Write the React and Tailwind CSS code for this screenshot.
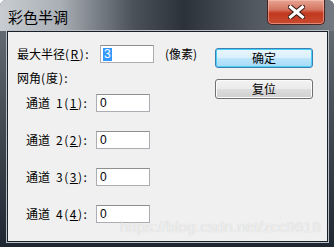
import React from "react";

const cjk = { fontFamily: '"Noto Sans CJK SC", "Liberation Sans", sans-serif' };

function Input({ value, selected }) {
  return (
    <div className="w-[54px] h-[18px] bg-white border border-[#abadb3] border-t-[#8e8f8f] flex items-center pl-[2px] text-[12px] leading-none text-black" style={{ fontFamily: '"Liberation Sans", sans-serif' }}>
      {selected ? (
        <span className="bg-[#3399ff] text-white px-[1px] h-[13px] flex items-center">{value}</span>
      ) : (
        <span className="px-[1px]">{value}</span>
      )}
    </div>
  );
}

function Channel({ n }) {
  return (
    <div className="flex items-center h-[18px]">
      <div className="w-[79px] pl-[9px] text-[12px] leading-none whitespace-nowrap" style={cjk}>
        通道<span className="ml-[6px] tracking-[1.5px]">{n}(<span className="underline">{n}</span>):</span>
      </div>
      <Input value="0" />
    </div>
  );
}

export default function App() {
  return (
    <div className="relative w-[334px] h-[247px] overflow-hidden flex flex-col bg-[linear-gradient(to_bottom,#6d747b_0%,#4a525b_40%,#1f2832_100%)] rounded-t-[6px]">
      {/* title bar */}
      <div className="h-[31px] shrink-0 flex items-start justify-between bg-[linear-gradient(to_right,#c9cdd1_0%,#a9afb5_18%,#4b5159_40%,#2c323a_55%,#4f565e_75%,#737a82_100%)]">
        <div className="pl-[8px] pt-[8px] text-[15px] leading-[18px] text-black" style={cjk}>彩色半调</div>
        <div className="mr-[9px] w-[58px] h-[25px] rounded-b-[5px] border border-t-0 border-[#4a2420] bg-[linear-gradient(to_bottom,#e8a593_0%,#d47560_40%,#c2391f_55%,#c84a30_100%)] flex items-center justify-center shadow-[inset_0_0_0_1px_rgba(255,200,190,0.5)]">
          <svg width="17" height="14" viewBox="0 0 17 14">
            <path d="M2.5 2 L8.5 7 L14.5 2 M2.5 12 L8.5 7 L14.5 12" stroke="#3a1a14" strokeWidth="5" fill="none" strokeLinecap="square" />
            <path d="M2.5 2 L8.5 7 L14.5 2 M2.5 12 L8.5 7 L14.5 12" stroke="#ffffff" strokeWidth="3" fill="none" strokeLinecap="square" />
          </svg>
        </div>
      </div>
      {/* client */}
      <div className="ml-[7px] mr-[6px] h-[211px] border border-[#1a2028] shadow-[0_0_0_1px_#b9bec4]">
        <div className="relative h-full bg-[#f0f0f0] flex">
          <div className="flex flex-col pl-[9px] text-black">
            <div className="mt-[13px] flex items-center h-[18px]">
              <div className="w-[83px] text-[12px] leading-none whitespace-nowrap" style={cjk}>
                最大半径<span className="tracking-[1.5px]">(<span className="underline">R</span>):</span>
              </div>
              <Input value="3" selected />
              <div className="ml-[11px] text-[12px] leading-none whitespace-nowrap" style={cjk}>(像素)</div>
            </div>
            <div className="mt-[9px] h-[12px] text-[12px] leading-[12px] whitespace-nowrap" style={cjk}>网角<span className="tracking-[1px]">(度):</span></div>
            <div className="mt-[10px] flex flex-col gap-[19px]">
              <Channel n={1} />
              <Channel n={2} />
              <Channel n={3} />
              <Channel n={4} />
            </div>
          </div>
          <div className="ml-auto mr-[14px] mt-[16px] flex flex-col gap-[11px]">
            <div className="w-[98px] h-[20px] rounded-[3px] border border-[#3c7fb1] shadow-[inset_0_0_0_1px_#48d0f8] bg-[linear-gradient(to_bottom,#eaf6fd_0%,#d9f0fc_50%,#bee6fd_51%,#a7d9f5_100%)] flex items-center justify-center text-[12px] leading-none" style={cjk}>确定</div>
            <div className="w-[98px] h-[20px] rounded-[3px] border border-[#707070] shadow-[inset_0_0_0_1px_#fcfcfc] bg-[linear-gradient(to_bottom,#f2f2f2_0%,#ebebeb_50%,#dddddd_51%,#cfcfcf_100%)] flex items-center justify-center text-[12px] leading-none" style={cjk}>复位</div>
          </div>
          <div className="absolute left-[112px] top-[187px] text-[15.5px] leading-none text-white/70 whitespace-nowrap" style={{ fontFamily: '"Liberation Sans", sans-serif', textShadow: "0 0 1px rgba(0,0,0,0.2)" }}>
            https://blog.csdn.net/zcc9618
          </div>
        </div>
      </div>
    </div>
  );
}
